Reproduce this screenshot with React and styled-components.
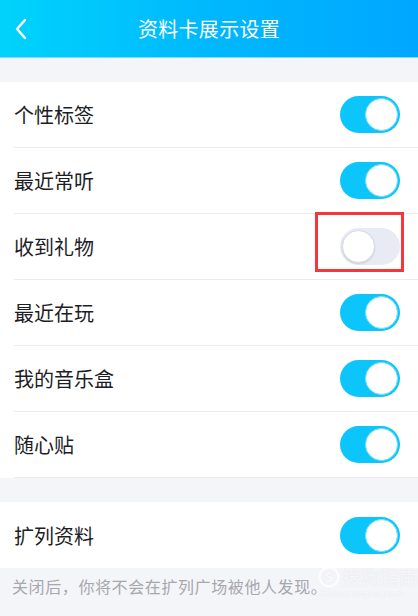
import styled, { createGlobalStyle } from "styled-components"

const GlobalStyle = createGlobalStyle`
  html, body {
    margin: 0;
    padding: 0;
    background: #f4f5f9;
    font-family: "Noto Sans CJK SC", "Noto Sans", sans-serif;
  }
`

const Page = styled.div`
  width: 418px;
  min-height: 616px;
  background: #f4f5f9;
  position: relative;
  overflow: hidden;
`

const Header = styled.div`
  height: 57px;
  display: grid;
  grid-template-columns: 60px 1fr 60px;
  align-items: center;
  background: linear-gradient(90deg, #00d3fb 0%, #00b8fd 50%, #00a7ff 100%);
  border-bottom: 1px solid #7fdcfb;
`

const Back = styled.div`
  display: flex;
  align-items: center;
  padding-left: 14px;
  height: 100%;
`

const Title = styled.div`
  text-align: center;
  color: #fff;
  font-size: 20px;
  letter-spacing: 0.3px;
`

const Section = styled.div`
  background: #fff;
  margin-top: ${(p) => p.gap}px;
`

const RowWrap = styled.div`
  padding-left: 14px;
`

const RowInner = styled.div`
  height: 66px;
  display: flex;
  align-items: center;
  justify-content: space-between;
  padding-right: 18px;
  box-sizing: border-box;
  border-bottom: ${(p) => (p.line ? "1px solid #eaebef" : "none")};
`

const Label = styled.div`
  font-size: 20px;
  color: #1d1d26;
`

const Track = styled.div`
  width: 60px;
  height: 37px;
  border-radius: 19px;
  background: ${(p) => (p.on ? "#0cc6fb" : "#e9ebf4")};
  display: flex;
  align-items: center;
  justify-content: ${(p) => (p.on ? "flex-end" : "flex-start")};
  padding: 0 2px;
  box-sizing: border-box;
`

const Knob = styled.div`
  width: 33px;
  height: 33px;
  border-radius: 50%;
  background: #fff;
  box-sizing: border-box;
  border: 1px solid ${(p) => (p.on ? "#7bdcfc" : "#d8dae4")};
  box-shadow: ${(p) => (p.on ? "none" : "0 1px 2px rgba(0,0,0,0.12)")};
`

const Highlight = styled.div`
  position: absolute;
  left: 315px;
  top: 212px;
  width: 89px;
  height: 60px;
  border: 3px solid #f5373b;
  box-sizing: border-box;
`

const Note = styled.div`
  padding: 6px 12px;
  font-size: 16px;
  color: #a7a7ae;
  letter-spacing: 0.6px;
`

const Watermark = styled.div`
  position: absolute;
  left: 318px;
  top: 566px;
  display: flex;
  flex-direction: column;
  align-items: flex-start;
  color: rgba(255, 255, 255, 0.75);
  pointer-events: none;
`

const MarkTop = styled.div`
  display: flex;
  align-items: center;
  gap: 2px;
  font-size: 19px;
  line-height: 22px;
  text-shadow: 0 0 1px rgba(200, 200, 210, 0.6);
`

const MarkUrl = styled.div`
  font-family: "DejaVu Sans", sans-serif;
  font-size: 8px;
  letter-spacing: 0.8px;
  margin-top: 2px;
  color: rgba(255, 255, 255, 0.85);
  text-shadow: 0 0 1px rgba(200, 200, 210, 0.6);
`

const Switch = ({ on }) => (
  <Track on={on ? 1 : 0}>
    <Knob on={on ? 1 : 0} />
  </Track>
)

const items = [
  { label: "个性标签", on: true },
  { label: "最近常听", on: true },
  { label: "收到礼物", on: false },
  { label: "最近在玩", on: true },
  { label: "我的音乐盒", on: true },
  { label: "随心贴", on: true },
]

const App = () => {
  return (
    <Page>
      <GlobalStyle />
      <Header>
        <Back>
          <svg width="14" height="22" viewBox="0 0 14 22">
            <path d="M11 2 L3 11 L11 20" fill="none" stroke="#fff" strokeWidth="2.4" strokeLinecap="round" strokeLinejoin="round" />
          </svg>
        </Back>
        <Title>资料卡展示设置</Title>
        <div />
      </Header>

      <Section gap={24}>
        {items.map((it) => (
          <RowWrap key={it.label}>
            <RowInner line>
              <Label>{it.label}</Label>
              <Switch on={it.on} />
            </RowInner>
          </RowWrap>
        ))}
      </Section>

      <Section gap={24}>
        <RowWrap>
          <RowInner>
            <Label>扩列资料</Label>
            <Switch on />
          </RowInner>
        </RowWrap>
      </Section>

      <Note>关闭后，你将不会在扩列广场被他人发现。</Note>

      <Highlight />

      <Watermark>
        <MarkTop>
          <svg width="22" height="22" viewBox="0 0 22 22">
            <circle cx="11" cy="11" r="9.5" fill="none" stroke="rgba(255,255,255,0.8)" strokeWidth="2" />
            <text x="11" y="16" textAnchor="middle" fontSize="14" fontWeight="bold" fill="rgba(255,255,255,0.8)" fontFamily="DejaVu Sans">S</text>
          </svg>
          <span>搜狗指南</span>
        </MarkTop>
        <MarkUrl>zhinan.sogou.com</MarkUrl>
      </Watermark>
    </Page>
  )
}

export default App
